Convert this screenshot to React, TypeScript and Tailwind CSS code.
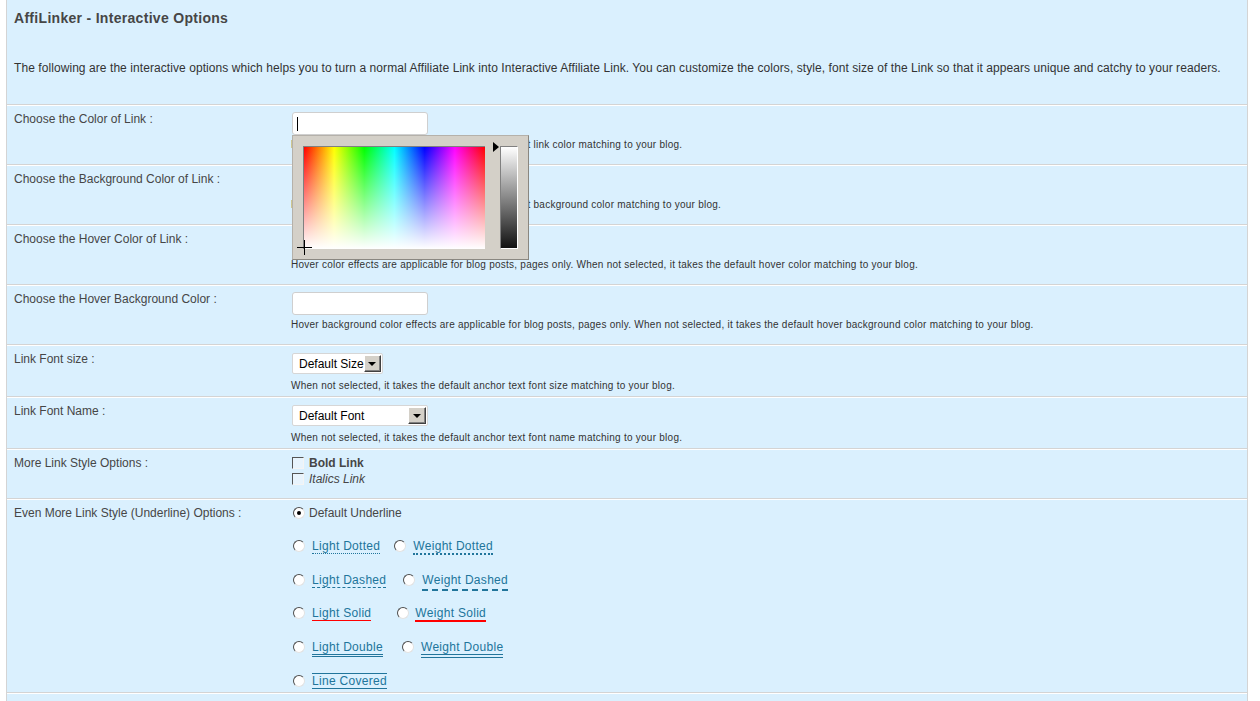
import React from 'react';

const font = "font-['Liberation_Sans',Arial,sans-serif]";

function Row({ label, h, children }: { label: string; h: string; children?: React.ReactNode }) {
  return (
    <div className={`flex border-t border-[#d4d4d4] shadow-[inset_0_1px_0_#ffffff] px-[7px] pt-[7px] ${h}`}>
      <div className="w-[278px] shrink-0 text-[12px] leading-[14px] text-[#464646]">{label}</div>
      <div className="flex-1 min-w-0">{children}</div>
    </div>
  );
}

function Hint({ children, className = '' }: { children: React.ReactNode; className?: string }) {
  return <p className={`text-[10px] leading-[12px] tracking-[0.25px] text-[#333] -ml-[1px] ${className}`}>{children}</p>;
}

function TextBox({ caret = false }: { caret?: boolean }) {
  return (
    <div className="relative w-[136px] h-[23px] bg-white border border-[#cfcfcf] rounded-[3px]">
      {caret && <span className="absolute left-[4px] top-[4px] w-[1px] h-[14px] bg-black" />}
    </div>
  );
}

function DropButton() {
  return (
    <span className="flex items-center justify-center w-[18px] h-[17px] bg-[#d4d0c8] border border-t-white border-l-white border-r-[#404040] border-b-[#404040] shadow-[inset_-1px_-1px_0_#808080]">
      <span className="w-0 h-0 border-x-[4px] border-x-transparent border-t-[4px] border-t-black mt-[1px]" />
    </span>
  );
}

function FakeSelect({ text, width }: { text: string; width: string }) {
  return (
    <div className={`flex items-center justify-between h-[21px] bg-white border border-[#d6d6d6] rounded-[2px] pl-[6px] pr-[1px] ${width}`}>
      <span className="text-[12px] leading-[14px] text-black whitespace-nowrap">{text}</span>
      <DropButton />
    </div>
  );
}

function Checkbox() {
  return (
    <span className="inline-block w-[12px] h-[12px] border border-t-[#555] border-l-[#555] border-r-[#f4f4f4] border-b-[#f4f4f4] bg-[#e8f4fd] shrink-0" />
  );
}

function Radio({ checked = false, className = '' }: { checked?: boolean; className?: string }) {
  return (
    <span className={`relative inline-block mt-[1px] w-[12px] h-[12px] rounded-full border border-t-[#4d4d4d] border-l-[#4d4d4d] border-r-[#e2e2e2] border-b-[#e2e2e2] bg-white shrink-0 ${className}`}>
      {checked && <span className="absolute left-[3px] top-[3px] w-[4px] h-[4px] rounded-full bg-black" />}
    </span>
  );
}

function ColorPicker() {
  return (
    <div className="absolute left-0 top-[23px] z-10 w-[237px] h-[125px] bg-[#d4d0c8] border border-t-[#b5b1aa] border-l-[#b5b1aa] border-r-[#8a8780] border-b-[#8a8780]">
      <div className="absolute left-[10px] top-[10px] w-[182px] h-[103px] border-t border-l border-[#808080] bg-[linear-gradient(to_bottom,rgba(255,255,255,0)_0%,#ffffff_100%),linear-gradient(to_right,#ff0000,#ffff00,#00ff00,#00ffff,#0000ff,#ff00ff,#ff0000)]" />
      <svg className="absolute left-[4px] top-[104px]" width="15" height="15" viewBox="0 0 15 15">
        <line x1="0" y1="7.5" x2="15" y2="7.5" stroke="#000" strokeWidth="1" />
        <line x1="7.5" y1="0" x2="7.5" y2="15" stroke="#000" strokeWidth="1" />
      </svg>
      <span className="absolute left-[200px] top-[6px] w-0 h-0 border-y-[5px] border-y-transparent border-l-[6px] border-l-black" />
      <div className="absolute left-[207px] top-[10px] w-[18px] h-[103px] border border-t-[#808080] border-l-[#808080] border-r-white border-b-white bg-[linear-gradient(to_bottom,#ffffff,#111111)]" />
    </div>
  );
}

function UnderlineLink({ children, className }: { children: React.ReactNode; className: string }) {
  return (
    <span className={`inline-block text-[12px] leading-[14px] tracking-[0.3px] text-[#21759b] whitespace-nowrap ${className}`}>{children}</span>
  );
}

export default function App() {
  return (
    <div className={`min-h-[701px] bg-white ${font}`}>
      <div className="ml-[6px] mr-[12px] border-x border-[#d4d4d4] bg-[#daf0fe] h-[701px] overflow-hidden">
        {/* Header */}
        <div className="h-[104px] px-[7px] pt-[10px]">
          <h3 className="text-[14px] leading-[17px] tracking-[0.3px] font-bold text-[#464646]">AffiLinker - Interactive Options</h3>
          <p className="mt-[34px] text-[12px] leading-[14px] tracking-[0.07px] text-[#333]">
            The following are the interactive options which helps you to turn a normal Affiliate Link into Interactive Affiliate Link. You can customize the colors, style, font size of the Link so that it appears unique and catchy to your readers.
          </p>
        </div>

        <Row label="Choose the Color of Link :" h="h-[60px]">
          <div className="relative w-[136px]">
            <TextBox caret />
            <ColorPicker />
          </div>
          <Hint className="mt-[4px]">Pick a color. When not selected, it takes the default link color matching to your blog.</Hint>
        </Row>

        <Row label="Choose the Background Color of Link :" h="h-[60px]">
          <TextBox />
          <Hint className="mt-[4px]">Pick a color. When not selected, it takes the default background color matching to your blog.</Hint>
        </Row>

        <Row label="Choose the Hover Color of Link :" h="h-[60px]">
          <TextBox />
          <Hint className="mt-[4px]">Hover color effects are applicable for blog posts, pages only. When not selected, it takes the default hover color matching to your blog.</Hint>
        </Row>

        <Row label="Choose the Hover Background Color :" h="h-[60px]">
          <TextBox />
          <Hint className="mt-[4px]">Hover background color effects are applicable for blog posts, pages only. When not selected, it takes the default hover background color matching to your blog.</Hint>
        </Row>

        <Row label="Link Font size :" h="h-[52px]">
          <div className="mt-[1px]">
            <FakeSelect text="Default Size" width="w-[91px]" />
          </div>
          <Hint className="mt-[6px]">When not selected, it takes the default anchor text font size matching to your blog.</Hint>
        </Row>

        <Row label="Link Font Name :" h="h-[52px]">
          <div className="mt-[1px]">
            <FakeSelect text="Default Font" width="w-[136px]" />
          </div>
          <Hint className="mt-[6px]">When not selected, it takes the default anchor text font name matching to your blog.</Hint>
        </Row>

        <Row label="More Link Style Options :" h="h-[50px]">
          <div className="flex flex-col text-[12px] text-[#464646]">
            <label className="flex items-center gap-[5px] h-[14px]">
              <Checkbox />
              <span className="font-bold leading-[14px]">Bold Link</span>
            </label>
            <label className="flex items-center gap-[5px] h-[14px] mt-[2px]">
              <Checkbox />
              <span className="italic leading-[14px]">Italics Link</span>
            </label>
          </div>
        </Row>

        <Row label="Even More Link Style (Underline) Options :" h="h-[194px]">
          <div className="flex flex-col">
            <div className="flex items-start h-[14px] pl-[1px]">
              <Radio checked />
              <span className="ml-[4px] text-[12px] leading-[14px] text-[#464646]">Default Underline</span>
            </div>
            <div className="flex items-start h-[14px] pl-[1px] mt-[19px]">
              <Radio />
              <UnderlineLink className="ml-[7px] border-b border-dotted border-[#21759b]">Light Dotted</UnderlineLink>
              <Radio className="ml-[14px]" />
              <UnderlineLink className="ml-[7px] border-b-2 border-dotted border-[#21759b]">Weight Dotted</UnderlineLink>
            </div>
            <div className="flex items-start h-[14px] pl-[1px] mt-[20px]">
              <Radio />
              <UnderlineLink className="ml-[7px] border-b border-dashed border-[#21759b]">Light Dashed</UnderlineLink>
              <Radio className="ml-[17px]" />
              <UnderlineLink className="ml-[7px] border-b-2 border-dashed border-[#21759b] pb-[2px]">Weight Dashed</UnderlineLink>
            </div>
            <div className="flex items-start h-[14px] pl-[1px] mt-[19px]">
              <Radio />
              <UnderlineLink className="ml-[7px] border-b border-solid border-b-[#ff0000]">Light Solid</UnderlineLink>
              <Radio className="ml-[26px]" />
              <UnderlineLink className="ml-[6px] border-b-2 border-solid border-b-[#ff0000]">Weight Solid</UnderlineLink>
            </div>
            <div className="flex items-start h-[14px] pl-[1px] mt-[20px]">
              <Radio />
              <UnderlineLink className="ml-[7px] border-b-[3px] border-double border-[#21759b]">Light Double</UnderlineLink>
              <Radio className="ml-[19px]" />
              <UnderlineLink className="ml-[7px] border-b-4 border-double border-[#21759b]">Weight Double</UnderlineLink>
            </div>
            <div className="flex items-start h-[14px] pl-[1px] mt-[20px]">
              <Radio />
              <UnderlineLink className="ml-[7px] -mt-[1px] border-y border-[#21759b]">Line Covered</UnderlineLink>
            </div>
          </div>
        </Row>

        <Row label="" h="h-[20px]" />
      </div>
    </div>
  );
}
